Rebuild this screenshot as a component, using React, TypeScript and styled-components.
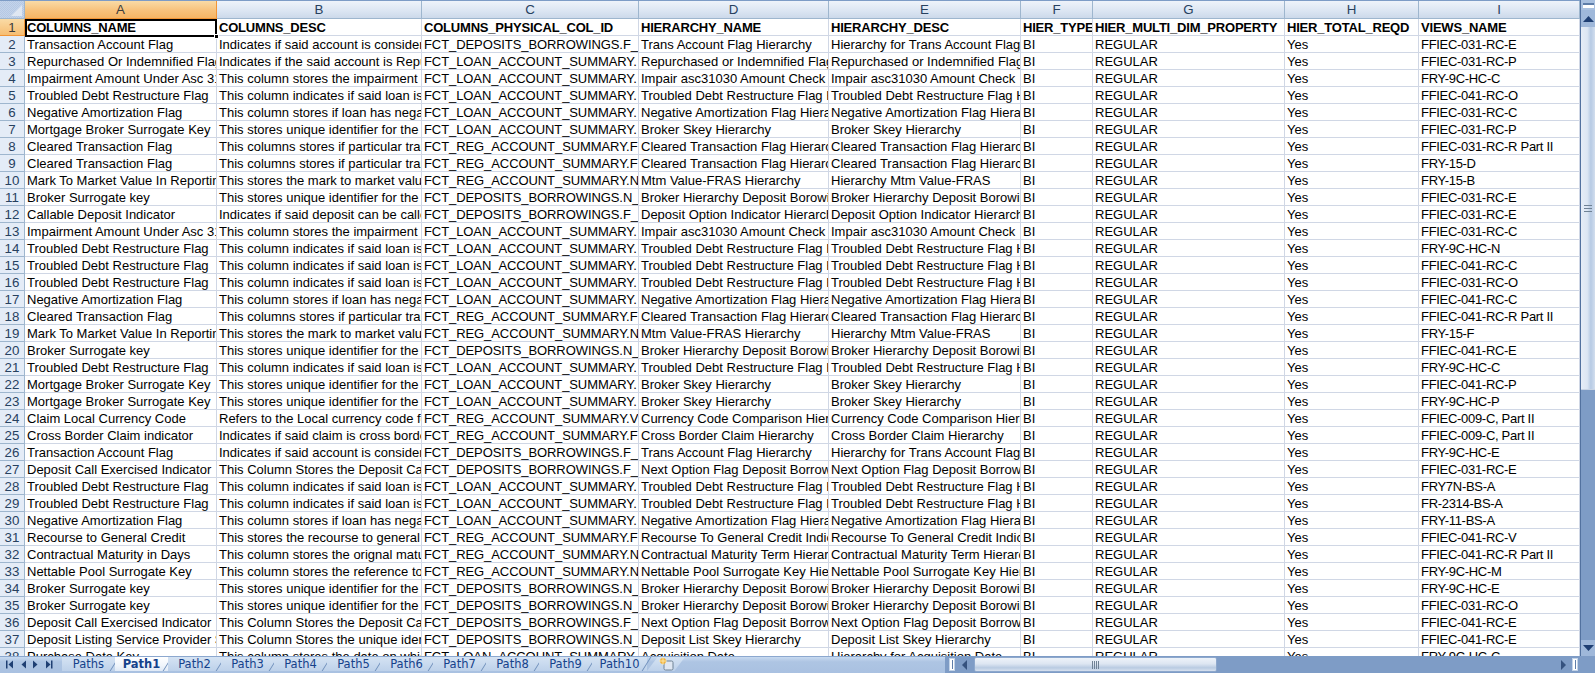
import React from 'react'
import styled, { createGlobalStyle } from 'styled-components'

const GlobalStyle = createGlobalStyle`
  html, body {
    margin: 0;
    padding: 0;
    overflow: hidden;
    background: #7e9cc6;
  }
`

const Workbook = styled.div`
  width: 1595px;
  height: 673px;
  display: flex;
  flex-direction: column;
  overflow: hidden;
  font-family: 'Liberation Sans', Arial, sans-serif;
`

const Main = styled.div`
  height: 656px;
  display: flex;
  flex: none;
`

const SheetArea = styled.div`
  width: 1580px;
  flex: none;
  overflow: hidden;
  background: #fff;
  border-top: 1px solid #7d9cc6;
`

const Sheet = styled.table`
  width: 1580px;
  table-layout: fixed;
  border-collapse: separate;
  border-spacing: 0;
  font-size: 13px;
  color: #000;
`

const ColHead = styled.th<{ $on?: boolean }>`
  height: 18px;
  padding: 0;
  box-sizing: border-box;
  font-weight: 400;
  font-size: 13.33px;
  text-align: center;
  color: ${(p) => (p.$on ? '#3b3b3b' : '#27415f')};
  background: ${(p) =>
    p.$on ? 'linear-gradient(#f9dba6, #f7c27c 55%, #f5b565)' : 'linear-gradient(#eef3fa, #dbe5f2 60%, #ccd9ea)'};
  border-right: 1px solid ${(p) => (p.$on ? '#f29536' : '#9eb6ce')};
  border-bottom: 1px solid ${(p) => (p.$on ? '#f29536' : '#9eb6ce')};
`

const Corner = styled.th`
  position: relative;
  height: 18px;
  padding: 0;
  box-sizing: border-box;
  background: repeating-conic-gradient(#b5c8e4 0% 25%, #c4d4ea 0% 50%) 0 0 / 2px 2px;
  border-right: 1px solid #9eb6ce;
  border-bottom: 1px solid #9eb6ce;

  &::after {
    content: '';
    position: absolute;
    right: 2px;
    bottom: 2px;
    width: 11px;
    height: 11px;
    background: #dfe7f2;
    clip-path: polygon(100% 0, 100% 100%, 0 100%);
  }
`

const RowHead = styled.th<{ $on?: boolean }>`
  height: 17px;
  padding: 0;
  box-sizing: border-box;
  font-weight: 400;
  font-size: 13.33px;
  text-align: center;
  color: ${(p) => (p.$on ? '#3b3b3b' : '#27415f')};
  background: ${(p) => (p.$on ? 'linear-gradient(#f9dba6, #f6bd72)' : '#e4ecf7')};
  border-right: 1px solid ${(p) => (p.$on ? '#f29536' : '#9eb6ce')};
  border-bottom: 1px solid ${(p) => (p.$on ? '#f29536' : '#9eb6ce')};
`

const Cell = styled.td<{ $bold?: boolean; $track?: number }>`
  height: 17px;
  padding: 0 0 0 2px;
  box-sizing: border-box;
  overflow: hidden;
  white-space: nowrap;
  line-height: 15px;
  font-weight: ${(p) => (p.$bold ? 700 : 400)};
  letter-spacing: ${(p) => p.$track ?? 0}px;
  border-right: 1px solid #d0d7e5;
  border-bottom: 1px solid #d0d7e5;
`

const ActiveCell = styled.div`
  position: absolute;
  left: 25px;
  top: 18px;
  width: 192px;
  height: 18px;
  box-sizing: border-box;
  border: 2px solid #000;
  pointer-events: none;

  &::after {
    content: '';
    position: absolute;
    right: -4px;
    bottom: -4px;
    width: 5px;
    height: 5px;
    background: #000;
    border: 1px solid #fff;
    box-sizing: border-box;
  }
`

const SheetWrap = styled.div`
  position: relative;
`

const VScroll = styled.div`
  flex: 1;
  display: flex;
  flex-direction: column;
  align-items: stretch;
  border-left: 1px solid #52719f;
  background: #7e9cc6;
`

const SplitBox = styled.div`
  height: 10px;
  flex: none;
  display: flex;
  align-items: center;
  justify-content: center;
  background: #aac1e0;

  &::after {
    content: '';
    width: 11px;
    height: 5px;
    box-sizing: border-box;
    background: #fff;
    border-top: 2px solid #5f7ea9;
  }
`

const VArrow = styled.div<{ $h: number }>`
  height: ${(p) => p.$h}px;
  flex: none;
  display: flex;
  align-items: center;
  justify-content: center;
  background: #9fb8da;
`

const VThumb = styled.div`
  height: 363px;
  flex: none;
  display: flex;
  align-items: center;
  justify-content: center;
  padding-bottom: 0;
  background: linear-gradient(90deg, #e6edf7, #dce6f3 45%, #b6cae4 70%, #d2deee);
  border-bottom: 1px solid #c7d3e4;
  box-sizing: border-box;
`

const VTrack = styled.div`
  flex: 1;
`

const BottomBar = styled.div`
  flex: 1;
  display: flex;
  align-items: stretch;
  background: #7e9cc6;
`

const TabStrip = styled.div`
  width: 945px;
  flex: none;
  display: flex;
  align-items: stretch;
  background: linear-gradient(#c8daf0, #aec5e3 30%, #a9c1e1);
  border-top: 1px solid #8ca8cf;
  box-sizing: border-box;
`

const NavGroup = styled.div`
  width: 62px;
  flex: none;
  display: flex;
  align-items: center;
  justify-content: space-around;
  padding: 0 6px 2px 3px;
  box-sizing: border-box;
`

const Tab = styled.div<{ $on?: boolean; $w?: number }>`
  position: relative;
  width: ${(p) => p.$w ?? 53}px;
  flex: none;
  margin-bottom: 2px;
  display: flex;
  align-items: center;
  justify-content: center;
  font-family: 'DejaVu Sans', Tahoma, sans-serif;
  font-size: 11.5px;
  font-weight: ${(p) => (p.$on ? 700 : 400)};
  color: #15428b;
  background: ${(p) => (p.$on ? 'linear-gradient(#fff, #f0f5fb 60%, #dfe9f6)' : 'linear-gradient(#d5e3f3, #bdd1ea)')};

  &::after {
    content: '';
    position: absolute;
    top: 0;
    right: 0;
    bottom: 0;
    width: 1px;
    background: #6f8fbb;
    transform: skewX(-32deg);
  }
`

const NewSheet = styled.div`
  width: 38px;
  flex: none;
  margin-bottom: 2px;
  display: flex;
  align-items: center;
  justify-content: center;
  background: linear-gradient(#d5e3f3, #bdd1ea);
  clip-path: polygon(0 100%, 28% 0, 100% 0, 72% 100%);
`

const HScroll = styled.div`
  flex: 1;
  display: flex;
  align-items: flex-start;
  padding-top: 1px;
`

const Splitter = styled.div`
  width: 6px;
  height: 13px;
  flex: none;
  box-sizing: border-box;
  margin: 1px 0 0 4px;
  background: #fff;
  border: 1px solid #c4d4e8;
  display: flex;
  justify-content: center;

  &::after {
    content: '';
    width: 1px;
    height: 9px;
    margin-top: 1px;
    background: #5f7ea9;
  }
`

const HArrow = styled.div<{ $w: number }>`
  width: ${(p) => p.$w}px;
  height: 15px;
  flex: none;
  display: flex;
  align-items: center;
  justify-content: center;
`

const HThumb = styled.div`
  width: 243px;
  height: 15px;
  flex: none;
  display: flex;
  align-items: center;
  justify-content: center;
  box-sizing: border-box;
  border: 1px solid #8da8cd;
  border-radius: 2px;
  background: linear-gradient(#eef3f9, #dde6f2 45%, #b9cbe2 75%, #d7e1ef);
`

const HTrack = styled.div`
  flex: 1;
`

const Grip = styled.svg`
  display: block;
`

const COLS = ['A', 'B', 'C', 'D', 'E', 'F', 'G', 'H', 'I']
const WIDTHS = [192, 205, 217, 190, 192, 72, 192, 134, 161]
const TITLES = [
  'COLUMNS_NAME',
  'COLUMNS_DESC',
  'COLUMNS_PHYSICAL_COL_ID',
  'HIERARCHY_NAME',
  'HIERARCHY_DESC',
  'HIER_TYPE',
  'HIER_MULTI_DIM_PROPERTY',
  'HIER_TOTAL_REQD',
  'VIEWS_NAME',
]

// column C only shows this much of the id before the next cell cuts it
const DEP_F = 'FCT_DEPOSITS_BORROWINGS.F_'
const DEP_N = 'FCT_DEPOSITS_BORROWINGS.N_'
const LOAN = 'FCT_LOAN_ACCOUNT_SUMMARY.'
const REG_F = 'FCT_REG_ACCOUNT_SUMMARY.F'
const REG_N = 'FCT_REG_ACCOUNT_SUMMARY.N'
const REG_V = 'FCT_REG_ACCOUNT_SUMMARY.V'

type Base = [string, string, string, string, string]

const trans: Base = ['Transaction Account Flag', 'Indicates if said account is considered', DEP_F, 'Trans Account Flag Hierarchy', 'Hierarchy for Trans Account Flag']
const repurchased: Base = ['Repurchased Or Indemnified Flag', 'Indicates if the said account is Repurchased', LOAN, 'Repurchased or Indemnified Flag', 'Repurchased or Indemnified Flag']
const impair: Base = ['Impairment Amount Under Asc 310', 'This column stores the impairment amount', LOAN, 'Impair asc31030 Amount Check', 'Impair asc31030 Amount Check']
const troubled: Base = ['Troubled Debt Restructure Flag', 'This column indicates if said loan is', LOAN, 'Troubled Debt Restructure Flag Hierarchy', 'Troubled Debt Restructure Flag Hierarchy']
const negative: Base = ['Negative Amortization Flag', 'This column stores if loan has negative', LOAN, 'Negative Amortization Flag Hierarchy', 'Negative Amortization Flag Hierarchy']
const mortgage: Base = ['Mortgage Broker Surrogate Key', 'This stores unique identifier for the', LOAN, 'Broker Skey Hierarchy', 'Broker Skey Hierarchy']
const cleared: Base = ['Cleared Transaction Flag', 'This columns stores if particular transaction', REG_F, 'Cleared Transaction Flag Hierarchy', 'Cleared Transaction Flag Hierarchy']
const mtm: Base = ['Mark To Market Value In Reporting', 'This stores the mark to market value', REG_N, 'Mtm Value-FRAS Hierarchy', 'Hierarchy Mtm Value-FRAS']
const broker: Base = ['Broker Surrogate key', 'This stores unique identifier for the', DEP_N, 'Broker Hierarchy Deposit Borowing', 'Broker Hierarchy Deposit Borowing']
const callable: Base = ['Callable Deposit Indicator', 'Indicates if said deposit can be called', DEP_F, 'Deposit Option Indicator Hierarchy', 'Deposit Option Indicator Hierarchy']
const claim: Base = ['Claim Local Currency Code', 'Refers to the Local currency code for', REG_V, 'Currency Code Comparison Hierarchy', 'Currency Code Comparison Hierarchy']
const cross: Base = ['Cross Border Claim indicator', 'Indicates if said claim is cross border', REG_F, 'Cross Border Claim Hierarchy', 'Cross Border Claim Hierarchy']
const deposit: Base = ['Deposit Call Exercised Indicator', 'This Column Stores the Deposit Call', DEP_F, 'Next Option Flag Deposit Borrowing', 'Next Option Flag Deposit Borrowing']
const recourse: Base = ['Recourse to General Credit', 'This stores the recourse to general', REG_F, 'Recourse To General Credit Indicator', 'Recourse To General Credit Indicator']
const maturity: Base = ['Contractual Maturity in Days', 'This column stores the orignal maturity', REG_N, 'Contractual Maturity Term Hierarchy', 'Contractual Maturity Term Hierarchy']
const nettable: Base = ['Nettable Pool Surrogate Key', 'This column stores the reference to', REG_N, 'Nettable Pool Surrogate Key Hierarchy', 'Nettable Pool Surrogate Key Hierarchy']
const listing: Base = ['Deposit Listing Service Provider Surrogate', 'This Column Stores the unique identifier', DEP_N, 'Deposit List Skey Hierarchy', 'Deposit List Skey Hierarchy']
const purchase: Base = ['Purchase Date Key', 'This column stores the date on which', LOAN, 'Acquisition Date', 'Hierarchy for Acquisition Date']

const ROWS: [Base, string][] = [
  [trans, 'FFIEC-031-RC-E'],
  [repurchased, 'FFIEC-031-RC-P'],
  [impair, 'FRY-9C-HC-C'],
  [troubled, 'FFIEC-041-RC-O'],
  [negative, 'FFIEC-031-RC-C'],
  [mortgage, 'FFIEC-031-RC-P'],
  [cleared, 'FFIEC-031-RC-R Part II'],
  [cleared, 'FRY-15-D'],
  [mtm, 'FRY-15-B'],
  [broker, 'FFIEC-031-RC-E'],
  [callable, 'FFIEC-031-RC-E'],
  [impair, 'FFIEC-031-RC-C'],
  [troubled, 'FRY-9C-HC-N'],
  [troubled, 'FFIEC-041-RC-C'],
  [troubled, 'FFIEC-031-RC-O'],
  [negative, 'FFIEC-041-RC-C'],
  [cleared, 'FFIEC-041-RC-R Part II'],
  [mtm, 'FRY-15-F'],
  [broker, 'FFIEC-041-RC-E'],
  [troubled, 'FRY-9C-HC-C'],
  [mortgage, 'FFIEC-041-RC-P'],
  [mortgage, 'FRY-9C-HC-P'],
  [claim, 'FFIEC-009-C, Part II'],
  [cross, 'FFIEC-009-C, Part II'],
  [trans, 'FRY-9C-HC-E'],
  [deposit, 'FFIEC-031-RC-E'],
  [troubled, 'FRY7N-BS-A'],
  [troubled, 'FR-2314-BS-A'],
  [negative, 'FRY-11-BS-A'],
  [recourse, 'FFIEC-041-RC-V'],
  [maturity, 'FFIEC-041-RC-R Part II'],
  [nettable, 'FRY-9C-HC-M'],
  [broker, 'FRY-9C-HC-E'],
  [broker, 'FFIEC-031-RC-O'],
  [deposit, 'FFIEC-041-RC-E'],
  [listing, 'FFIEC-041-RC-E'],
  [purchase, 'FRY-9C-HC-C'],
]

const TABS = ['Path2', 'Path3', 'Path4', 'Path5', 'Path6', 'Path7', 'Path8', 'Path9']

const NavIcon = ({ dir, bar }: { dir: 'l' | 'r'; bar?: boolean }) => (
  <svg width="8" height="9" viewBox="0 0 8 9">
    <path d={dir === 'l' ? 'M7 0.5v8L2.5 4.5z' : 'M1 0.5v8L5.5 4.5z'} fill="#1f3f73" />
    {bar && <rect x={dir === 'l' ? 0 : 6} y="0.5" width="1.5" height="8" fill="#1f3f73" />}
  </svg>
)

const App: React.FC = () => (
  <Workbook>
    <GlobalStyle />
    <Main>
      <SheetArea>
        <SheetWrap>
          <Sheet>
            <colgroup>
              <col style={{ width: 25 }} />
              {WIDTHS.map((w, i) => (
                <col key={i} style={{ width: w }} />
              ))}
            </colgroup>
            <thead>
              <tr>
                <Corner />
                {COLS.map((c, i) => (
                  <ColHead key={c} $on={i === 0}>
                    {c}
                  </ColHead>
                ))}
              </tr>
            </thead>
            <tbody>
              <tr>
                <RowHead $on>1</RowHead>
                {TITLES.map((t) => (
                  <Cell key={t} $bold $track={-0.2}>
                    {t}
                  </Cell>
                ))}
              </tr>
              {ROWS.map(([b, view], i) => (
                <tr key={i}>
                  <RowHead>{i + 2}</RowHead>
                  <Cell>{b[0]}</Cell>
                  <Cell>{b[1]}</Cell>
                  <Cell $track={-0.08}>{b[2]}</Cell>
                  <Cell>{b[3]}</Cell>
                  <Cell>{b[4]}</Cell>
                  <Cell>BI</Cell>
                  <Cell>REGULAR</Cell>
                  <Cell>Yes</Cell>
                  <Cell $track={-0.3}>{view}</Cell>
                </tr>
              ))}
            </tbody>
          </Sheet>
          <ActiveCell />
        </SheetWrap>
      </SheetArea>
      <VScroll>
        <SplitBox />
        <VArrow $h={17}>
          <svg width="11" height="6" viewBox="0 0 11 6">
            <path d="M5.5 0L11 6H0z" fill="#1f3f73" />
          </svg>
        </VArrow>
        <VThumb>
          <Grip width="8" height="7" viewBox="0 0 8 7">
            <path d="M0 .5h8M0 3.5h8M0 6.5h8" stroke="#6f8295" />
          </Grip>
        </VThumb>
        <VTrack />
        <VArrow $h={16}>
          <svg width="11" height="6" viewBox="0 0 11 6">
            <path d="M0 0h11L5.500 6z" fill="#1f3f73" />
          </svg>
        </VArrow>
      </VScroll>
    </Main>
    <BottomBar>
      <TabStrip>
        <NavGroup>
          <NavIcon dir="l" bar />
          <NavIcon dir="l" />
          <NavIcon dir="r" />
          <NavIcon dir="r" bar />
        </NavGroup>
        <Tab>Paths</Tab>
        <Tab $on>Path1</Tab>
        {TABS.map((t) => (
          <Tab key={t}>{t}</Tab>
        ))}
        <Tab $w={55}>Path10</Tab>
        <NewSheet>
          <svg width="15" height="14" viewBox="0 0 15 14">
            <rect x="5" y="4" width="9" height="9" rx="1.500" fill="#dfe7f2" stroke="#6f8295" />
            <circle cx="4" cy="4" r="3" fill="#f2b23a" />
            <path d="M4 0v8M0 4h8" stroke="#fbe6a8" />
          </svg>
        </NewSheet>
      </TabStrip>
      <HScroll>
        <Splitter />
        <HArrow $w={19}>
          <svg width="5" height="10" viewBox="0 0 5 10">
            <path d="M5 0v10L0 5z" fill="#35527f" />
          </svg>
        </HArrow>
        <HThumb>
          <Grip width="8" height="8" viewBox="0 0 8 8">
            <path d="M.5 0v8M2.500 0v8M4.500 0v8M6.500 0v8" stroke="#6f8295" />
          </Grip>
        </HThumb>
        <HTrack />
        <HArrow $w={10}>
          <svg width="5" height="10" viewBox="0 0 5 10">
            <path d="M0 0v10L5 5z" fill="#35527f" />
          </svg>
        </HArrow>
        <Splitter />
        <HArrow $w={17} />
      </HScroll>
    </BottomBar>
  </Workbook>
)

export default App
